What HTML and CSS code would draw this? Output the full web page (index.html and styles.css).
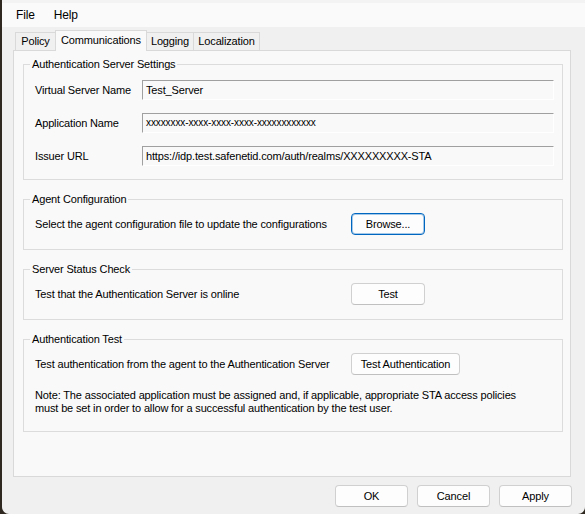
FILE: index.html
```html
<!DOCTYPE html>
<html lang="en">
<head>
    <meta charset="UTF-8">
    <title>Agent Configuration: Communications</title>
    <link rel="stylesheet" href="styles.css">
</head>
<body>
    <div class="window">

        <!-- Menu -->
        <div class="menubar">
            <span class="menu-item">File</span>
            <span class="menu-item">Help</span>
        </div>

        <!-- Tabs -->
        <div class="tabs">
            <div class="tab tab-policy">Policy</div>
            <div class="tab tab-comm active">Communications</div>
            <div class="tab tab-logging">Logging</div>
            <div class="tab tab-local">Localization</div>
        </div>

        <div class="panel">

            <!-- Server settings -->
            <div class="group group-server">
                <span class="group-title">Authentication Server Settings</span>
                <div class="field-row">
                    <label class="field-label">Virtual Server Name</label>
                    <div class="field">Test_Server</div>
                </div>
                <div class="field-row">
                    <label class="field-label">Application Name</label>
                    <div class="field field-masked">xxxxxxxx-xxxx-xxxx-xxxx-xxxxxxxxxxxx</div>
                </div>
                <div class="field-row">
                    <label class="field-label">Issuer URL</label>
                    <div class="field">https://idp.test.safenetid.com/auth/realms/XXXXXXXXX-STA</div>
                </div>
            </div>

            <!-- Agent configuration -->
            <div class="group">
                <span class="group-title">Agent Configuration</span>
                <div class="action-row">
                    <span class="action-text">Select the agent configuration file to update the configurations</span>
                    <button class="btn btn-default">Browse...</button>
                </div>
            </div>

            <!-- Status check -->
            <div class="group">
                <span class="group-title">Server Status Check</span>
                <div class="action-row">
                    <span class="action-text">Test that the Authentication Server is online</span>
                    <button class="btn">Test</button>
                </div>
            </div>

            <!-- Auth test -->
            <div class="group group-auth">
                <span class="group-title">Authentication Test</span>
                <div class="action-row">
                    <span class="action-text">Test authentication from the agent to the Authentication Server</span>
                    <button class="btn btn-wide">Test Authentication</button>
                </div>
                <p class="note">Note: The associated application must be assigned and, if applicable, appropriate STA access policies<br>must be set in order to allow for a successful authentication by the test user.</p>
            </div>

        </div>

        <!-- Dialog buttons -->
        <div class="footer">
            <button class="btn btn-footer">OK</button>
            <button class="btn btn-footer">Cancel</button>
            <button class="btn btn-footer">Apply</button>
        </div>

    </div>
</body>
</html>
```

FILE: styles.css
```css
* {
    box-sizing: border-box;
}

html, body {
    margin: 0;
}

body {
    width: 585px;
    height: 514px;
    overflow: hidden;
    background-color: #2e2820;
    font-family: "Liberation Sans", Arial, sans-serif;
    font-size: 11px;
    letter-spacing: -0.15px;
    color: #000;
}

.window {
    margin-left: 2px;
    height: 514px;
    background-color: #f0f0f0;
    border-radius: 0 0 7px 7px;
    border-top: 3px solid #f3f3f3;
}

.menubar {
    height: 24px;
    background-color: #fafafa;
    display: flex;
    align-items: center;
    gap: 19px;
    padding-left: 14px;
    font-size: 12px;
}

.tabs {
    display: flex;
    align-items: flex-end;
    height: 20px;
    margin: 3px 0 0 13px;
    position: relative;
    z-index: 1;
}

.tab {
    height: 18px;
    border: 1px solid #d9d9d9;
    border-bottom: none;
    background-color: #f0f0f0;
    text-align: center;
    line-height: 17px;
}

.tab-policy {
    width: 41px;
}

.tab-comm {
    width: 92px;
}

.tab-logging {
    width: 48px;
    margin-left: -1px;
}

.tab-local {
    width: 67px;
    margin-left: -1px;
}

.tab.active {
    height: 21px;
    margin-bottom: -1px;
    margin-left: -1px;
    background-color: #f9f9f9;
    line-height: 18px;
}

.panel {
    margin-left: 11px;
    width: 558px;
    height: 427px;
    border: 1px solid #d9d9d9;
    background-color: #f9f9f9;
    padding: 13px 0 0 9px;
}

.group {
    position: relative;
    width: 540px;
    border: 1px solid #dcdcdc;
    padding: 13px 0 14px 11px;
    margin-bottom: 19px;
}

.group-title {
    position: absolute;
    top: -8px;
    left: 6px;
    padding: 0 2px;
    line-height: 14px;
    background-color: #f9f9f9;
}

.group-server {
    padding-top: 15px;
    padding-bottom: 13px;
}

.field-row {
    display: flex;
    align-items: center;
    height: 20px;
}

.field-row + .field-row {
    margin-top: 13px;
}

.field-label {
    width: 107px;
}

.field {
    width: 412px;
    height: 20px;
    border: 1px solid;
    border-color: #a0a0a0 #ffffff #ffffff #a0a0a0;
    background-color: #f9f9f9;
    padding: 0 3px;
    line-height: 18px;
    white-space: nowrap;
}

.field-masked {
    font-size: 10px;
    letter-spacing: -0.1px;
}

.action-row {
    display: flex;
    align-items: center;
}

.action-text {
    width: 316px;
    white-space: nowrap;
}

.btn {
    width: 74px;
    height: 22px;
    padding: 0;
    border: 1px solid #d0d0d0;
    border-bottom-color: #c0c0c0;
    border-radius: 4px;
    background-color: #fdfdfd;
    font: inherit;
    letter-spacing: inherit;
    color: #000;
    text-align: center;
}

.btn-default {
    border-color: #0067c0;
    box-shadow: inset 0 0 0 1px rgba(0, 103, 192, 0.35);
}

.btn-wide {
    width: 109px;
}

.group-auth {
    padding-bottom: 16px;
}

.note {
    margin: 14px 0 0;
    line-height: 13px;
    white-space: nowrap;
}

.footer {
    display: flex;
    justify-content: flex-end;
    gap: 9px;
    margin-top: 8px;
    padding-right: 13px;
}

.btn-footer {
    width: 73px;
}
```
